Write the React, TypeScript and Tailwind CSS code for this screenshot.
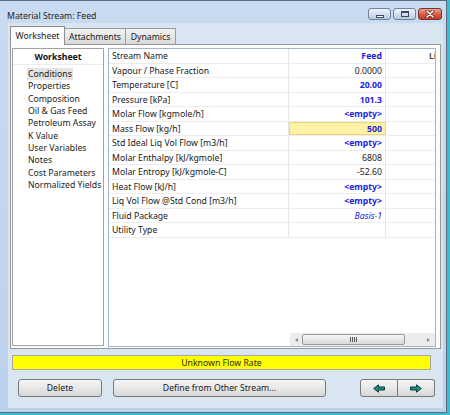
import React from "react";

type Row = { label: string; value: string; kind: "head" | "calc" | "spec" | "active" | "link" };

const rows: Row[] = [
  { label: "Stream Name", value: "Feed", kind: "head" },
  { label: "Vapour / Phase Fraction", value: "0.0000", kind: "calc" },
  { label: "Temperature [C]", value: "20.00", kind: "spec" },
  { label: "Pressure [kPa]", value: "101.3", kind: "spec" },
  { label: "Molar Flow [kgmole/h]", value: "<empty>", kind: "spec" },
  { label: "Mass Flow [kg/h]", value: "500", kind: "active" },
  { label: "Std Ideal Liq Vol Flow [m3/h]", value: "<empty>", kind: "spec" },
  { label: "Molar Enthalpy [kJ/kgmole]", value: "6808", kind: "calc" },
  { label: "Molar Entropy [kJ/kgmole-C]", value: "-52.60", kind: "calc" },
  { label: "Heat Flow [kJ/h]", value: "<empty>", kind: "spec" },
  { label: "Liq Vol Flow @Std Cond [m3/h]", value: "<empty>", kind: "spec" },
  { label: "Fluid Package", value: "Basis-1", kind: "link" },
  { label: "Utility Type", value: "", kind: "calc" },
];

const pages = [
  "Conditions",
  "Properties",
  "Composition",
  "Oil & Gas Feed",
  "Petroleum Assay",
  "K Value",
  "User Variables",
  "Notes",
  "Cost Parameters",
  "Normalized Yields",
];

const valueClass: Record<Row["kind"], string> = {
  head: "font-bold text-[#2323e0]",
  calc: "text-[#1a1a1a]",
  spec: "font-bold text-[#2323e0]",
  active: "font-bold text-[#2323e0]",
  link: "italic text-[#2323e0]",
};

function Arrow({ dir }: { dir: "left" | "right" }) {
  return (
    <svg width="12" height="9" viewBox="0 0 12 9" className={dir === "right" ? "" : "-scale-x-100"}>
      <path d="M0.5 3 H6.5 V0.8 L11.3 4.5 L6.5 8.2 V6 H0.5 Z" fill="#1f8a84" stroke="#0c3b3a" strokeWidth="1" strokeLinejoin="round" />
    </svg>
  );
}

function CaptionButton({ kind }: { kind: "min" | "max" | "close" }) {
  const base =
    kind === "close"
      ? "w-[24px] bg-gradient-to-b from-[#eaa396] via-[#d5604a] to-[#c23a22] border-[#7a3326]"
      : "w-[23px] bg-gradient-to-b from-[#eef3fa] via-[#d3e0f0] to-[#b6c9e2] border-[#6f819b]";
  return (
    <div className={`h-[12px] rounded-[3px] border flex items-center justify-center ${base}`}>
      {kind === "min" && <div className="w-[8px] h-[3px] mt-[4px] bg-white border border-[#3c4a5e]" />}
      {kind === "max" && <div className="w-[8px] h-[6px] bg-transparent border-[1.5px] border-[#3c4a5e] border-t-[2.5px]" />}
      {kind === "close" && (
        <svg width="10" height="8" viewBox="0 0 10 8">
          <path d="M2 1 L8 7 M8 1 L2 7" stroke="#5a1d12" strokeWidth="3" strokeLinecap="round" />
          <path d="M2 1 L8 7 M8 1 L2 7" stroke="#ffffff" strokeWidth="1.6" strokeLinecap="round" />
        </svg>
      )}
    </div>
  );
}

function Button({ children, className = "" }: { children: React.ReactNode; className?: string }) {
  return (
    <div
      className={`h-[18px] flex items-center justify-center rounded-[3px] border border-[#7a7a7a] bg-gradient-to-b from-[#f4f4f4] via-[#e8e8e8] to-[#d6d6d6] text-[#1a1a1a] ${className}`}
    >
      {children}
    </div>
  );
}

export default function App() {
  return (
    <div className="w-[450px] h-[415px] bg-[#3bbad0] overflow-hidden font-['Noto_Sans',sans-serif] text-[8.7px] leading-none">
      <div className="w-[447px] h-[413px] flex flex-col bg-gradient-to-b from-[#c9dbf0] to-[#bcd1ec] border-t border-r border-b border-[#5c6b80]">
        {/* title bar */}
        <div className="h-[22px] flex items-start shrink-0">
          <div className="pl-[7px] pt-[9px] leading-[12px] text-[#1e1e1e]">Material Stream: Feed</div>
          <div className="ml-auto mt-[7px] mr-[4px] flex gap-[2px]">
            <CaptionButton kind="min" />
            <CaptionButton kind="max" />
            <CaptionButton kind="close" />
          </div>
        </div>

        {/* client area */}
        <div className="ml-[8px] w-[435px] h-[385px] bg-[#dae5f2] flex flex-col shrink-0">
          {/* tabs */}
          <div className="pt-[3px] pl-[2px] flex items-end h-[21px] relative z-10">
            <div className="w-[55px] h-[19px] -mb-px pt-px bg-[#fcfcfc] border border-b-0 border-[#8e8e8e] flex items-center justify-center text-[#1a1a1a]">
              Worksheet
            </div>
            <div className="w-[61px] h-[16px] pt-px bg-gradient-to-b from-[#f2f2f2] to-[#d9d9d9] border border-b-0 border-l-0 border-[#9c9c9c] flex items-center justify-center text-[#1a1a1a]">
              Attachments
            </div>
            <div className="w-[50px] h-[16px] pt-px bg-gradient-to-b from-[#f2f2f2] to-[#d9d9d9] border border-b-0 border-l-0 border-[#9c9c9c] flex items-center justify-center text-[#1a1a1a]">
              Dynamics
            </div>
          </div>

          {/* tab page */}
          <div className="ml-[2px] w-[431px] h-[305px] border border-[#989898] bg-[#fbfbfb] flex pl-px pt-[3px] pr-[3px] gap-[4px]">
            {/* page list */}
            <div className="w-[92px] h-[298px] border border-[#a2a2a2] bg-white flex flex-col">
              <div className="h-[16px] shrink-0 pt-px flex items-center justify-center font-bold text-[#111] border-b border-[#ececec]">
                Worksheet
              </div>
              <div className="pt-[3px] flex flex-col">
                {pages.map((p, i) => (
                  <div key={p} className="h-[12.3px] pl-[14px] flex items-center text-[#1a1a1a] whitespace-nowrap">
                    <span className={`px-px leading-[12px] ${i === 0 ? "bg-[#e4e4e4]" : ""}`}>{p}</span>
                  </div>
                ))}
              </div>
            </div>

            {/* property grid */}
            <div className="w-[328px] h-[299px] border border-[#a3b5cc] bg-white flex flex-col overflow-hidden">
              <div className="flex flex-col">
                {rows.map((r) => (
                  <div key={r.label} className="h-[14.5px] flex shrink-0 border-b border-[#ededed]">
                    <div className="w-[180px] shrink-0 pl-[3px] pt-[2px] flex items-center text-[#1a1a1a] border-r border-[#e6e6e6] whitespace-nowrap">
                      {r.label}
                    </div>
                    <div
                      className={`w-[97px] shrink-0 pr-[3px] pt-[2px] flex items-center justify-end border-r border-[#e6e6e6] ${valueClass[r.kind]} ${
                        r.kind === "active" ? "bg-[#fff1a6] border border-[#efd47a]" : ""
                      }`}
                    >
                      {r.value}
                    </div>
                    <div className="flex-1 pl-[43px] pt-[2px] flex items-center text-[#4a463c] font-semibold whitespace-nowrap">
                      {r.kind === "head" ? "Li" : ""}
                    </div>
                  </div>
                ))}
              </div>
              <div className="flex-1" />
              {/* horizontal scrollbar */}
              <div className="h-[13px] flex shrink-0">
                <div className="w-[181px] shrink-0" />
                <div className="flex-1 bg-[#ececec] flex items-center">
                  <div className="w-[12px] flex justify-center">
                    <div className="w-0 h-0 border-y-[2.5px] border-y-transparent border-r-[3px] border-r-[#8a8a8a]" />
                  </div>
                  <div className="w-[103px] h-[11px] rounded-[2px] border border-[#9a9a9a] bg-gradient-to-b from-[#f6f6f6] to-[#d8d8d8] flex items-center justify-center gap-px">
                    <div className="w-px h-[5px] bg-[#555]" />
                    <div className="w-px h-[5px] bg-[#555]" />
                    <div className="w-px h-[5px] bg-[#555]" />
                    <div className="w-px h-[5px] bg-[#555]" />
                  </div>
                  <div className="flex-1 flex justify-end pr-[5px]">
                    <div className="w-0 h-0 border-y-[2.5px] border-y-transparent border-l-[3px] border-l-[#8a8a8a]" />
                  </div>
                </div>
              </div>
            </div>
          </div>

          {/* status */}
          <div className="mt-[6px] ml-[4px] w-[419px] h-[15px] pt-px bg-[#ffff00] border border-[#a8a8a0] flex items-center justify-center text-[#2a2a10]">
            Unknown Flow Rate
          </div>

          {/* buttons */}
          <div className="mt-[9px] flex items-center">
            <Button className="ml-[10px] w-[84px] pt-px">Delete</Button>
            <Button className="ml-[11px] w-[213px] pt-px">Define from Other Stream...</Button>
            <div className="ml-[34px] flex">
              <Button className="w-[38px] rounded-r-none">
                <Arrow dir="left" />
              </Button>
              <Button className="w-[37px] rounded-l-none border-l-0">
                <Arrow dir="right" />
              </Button>
            </div>
          </div>
        </div>
      </div>
    </div>
  );
}
